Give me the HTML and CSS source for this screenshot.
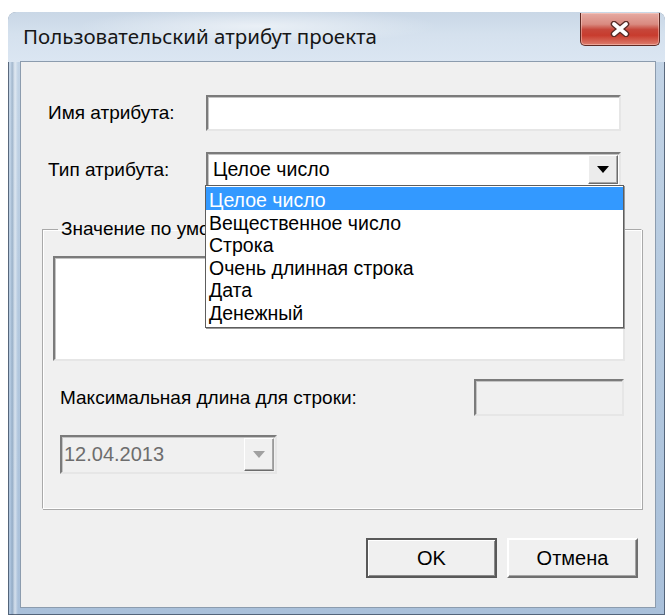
FILE: index.html
```html
<!DOCTYPE html>
<html lang="ru">
<head>
<meta charset="utf-8">
<title>Пользовательский атрибут проекта</title>
<link rel="stylesheet" href="styles.css">
</head>
<body>
<div class="window">
  <div class="titlebar">
    <span class="title">Пользовательский атрибут проекта</span>
    <button class="close" aria-label="Закрыть">
      <svg viewBox="0 0 22 16" width="22" height="16">
        <path class="x-edge" d="M5 3 L17 13 M17 3 L5 13"/>
        <path class="x-core" d="M5 3 L17 13 M17 3 L5 13"/>
      </svg>
    </button>
  </div>

  <div class="client">
    <div class="form">
      <label class="lbl">Имя атрибута:</label>
      <div class="edit name-edit"></div>

      <label class="lbl">Тип атрибута:</label>
      <div class="combo type-combo">
        <span class="combo-text">Целое число</span>
        <span class="drop-btn">
          <svg viewBox="0 0 12 7" width="12" height="7"><path d="M0 0 H12 L6 7 Z"/></svg>
        </span>
        <ul class="drop-list">
          <li class="sel">Целое число</li>
          <li>Вещественное число</li>
          <li>Строка</li>
          <li>Очень длинная строка</li>
          <li>Дата</li>
          <li>Денежный</li>
        </ul>
      </div>
    </div>

    <fieldset class="group">
      <legend>Значение по умолчанию</legend>
      <div class="edit memo"></div>
      <div class="max-row">
        <span class="lbl">Максимальная длина для строки:</span>
        <div class="edit max-edit"></div>
      </div>
      <div class="combo date-combo">
        <span class="combo-text">12.04.2013</span>
        <span class="drop-btn">
          <svg viewBox="0 0 12 7" width="12" height="7"><path d="M0 0 H12 L6 7 Z"/></svg>
        </span>
      </div>
    </fieldset>

    <div class="buttons">
      <button class="btn default">OK</button>
      <button class="btn">Отмена</button>
    </div>
  </div>
</div>
</body>
</html>
```

FILE: styles.css
```css
html, body {
  margin: 0;
  padding: 0;
  background: #ffffff;
}

body {
  width: 665px;
  height: 615px;
  overflow: hidden;
  font-family: "Liberation Sans", Arial, sans-serif;
  color: #000;
}

/* ---------- window frame ---------- */
.window {
  margin: 12px 0 0 8px;
  width: 657px;
  height: 603px;
  border-radius: 8px 8px 0 0;
  overflow: hidden;
  display: flex;
  flex-direction: column;
  background:
    linear-gradient(90deg, rgba(255,255,255,0) 0, rgba(255,255,255,0) 3px, rgba(90,120,150,.35) 4px, rgba(255,255,255,.5) 7px, rgba(255,255,255,0) 10px),
    linear-gradient(180deg, #cbd9e8 0, #c3d4e6 40px, #b4c9df 50%, #a9c0da 100%);
  box-shadow: inset 0 0 0 1px rgba(55, 70, 90, .75);
}

.titlebar {
  height: 50px;
  flex: none;
  display: flex;
  justify-content: space-between;
  align-items: flex-start;
  background:
    radial-gradient(ellipse 180px 18px at 250px 14px, rgba(255,255,255,.55), rgba(255,255,255,0)),
    linear-gradient(180deg, #c9d7e6 0, #d5e1ee 45%, #dbe6f2 100%);
}

.title {
  margin: 12px 0 0 15px;
  font-family: "Noto Sans", "Open Sans", sans-serif;
  font-size: 20.5px;
  line-height: 24px;
  color: #161616;
}

.close {
  margin: 1px 5px 0 0;
  width: 80px;
  height: 33px;
  padding: 0;
  border: 1px solid #5e2a24;
  border-top: none;
  border-radius: 0 0 5px 5px;
  background: linear-gradient(180deg, #e6aba3 0, #d98a80 35%, #c6463a 52%, #c83c2e 70%, #dd7e6e 100%);
  box-shadow: inset 0 0 0 1px rgba(255, 220, 210, .45);
  display: flex;
  align-items: center;
  justify-content: center;
}

.close svg { display: block; }

.x-edge {
  stroke: #5a2b26;
  stroke-width: 6.5;
  stroke-linecap: round;
  fill: none;
}

.x-core {
  stroke: #ffffff;
  stroke-width: 3.8;
  stroke-linecap: round;
  fill: none;
}

/* ---------- client area ---------- */
.client {
  flex: 1;
  margin: 0 10px 8px 13px;
  background: #f0f0f0;
  box-shadow: 0 0 0 1px #8c9cae;
  position: relative;
}

.lbl {
  font-size: 19px;
  line-height: 22px;
  color: #000;
  white-space: nowrap;
}

.form {
  display: grid;
  grid-template-columns: 158px 415px;
  row-gap: 21px;
  align-items: center;
  padding: 33px 0 0 27px;
}

/* sunken edit box */
.edit {
  box-sizing: border-box;
  background: #ffffff;
  border: 2px solid;
  border-color: #7b7b7b #e6e6e6 #e6e6e6 #7b7b7b;
  box-shadow: inset 1px 1px 0 #c4c4c4;
}

.name-edit { height: 36px; }

/* ---------- combo boxes ---------- */
.combo {
  box-sizing: border-box;
  position: relative;
  display: flex;
  align-items: stretch;
  background: #ffffff;
  border: 2px solid;
  border-color: #7b7b7b #e6e6e6 #e6e6e6 #7b7b7b;
  box-shadow: inset 1px 1px 0 #c4c4c4;
}

.type-combo { height: 35px; }

.combo-text {
  flex: 1;
  padding-left: 5px;
  font-size: 19.5px;
  line-height: 31px;
}

.drop-btn {
  flex: none;
  width: 28px;
  margin: 1px 1px 1px 0;
  background: #ececec;
  border: 1px solid;
  border-color: #ffffff #6c6c6c #6c6c6c #ffffff;
  box-shadow: inset -1px -1px 0 #a8a8a8;
  display: flex;
  align-items: center;
  justify-content: center;
}

.drop-btn svg { display: block; fill: #000; }

.drop-list {
  position: absolute;
  top: 100%;
  left: -3px;
  width: 419px;
  margin: 0;
  padding: 1px 0 5px;
  list-style: none;
  background: #ffffff;
  border: 1px solid #5d5d5d;
  box-sizing: border-box;
  box-shadow: 1px 1px 0 #9a9a9a;
  z-index: 2;
}

.drop-list li {
  height: 22.5px;
  line-height: 26px;
  padding-left: 3px;
  font-size: 19.5px;
  color: #000;
  white-space: nowrap;
}

.drop-list li.sel {
  background: #3399ff;
  color: #ffffff;
}

/* ---------- group box ---------- */
.group {
  width: 600px;
  box-sizing: border-box;
  margin: 31px 0 0 21px;
  padding: 0;
  border: 1px solid;
  border-color: #a9a9a9 #ffffff #ffffff #a9a9a9;
  box-shadow: inset 1px 1px 0 #ffffff, 1px 1px 0 #a9a9a9;
}

.group legend {
  margin-left: 15px;
  padding: 0 3px;
  font-size: 19px;
  line-height: 22px;
}

.memo {
  margin: 16px 0 0 10px;
  width: 572px;
  height: 105px;
}

.max-row {
  display: flex;
  justify-content: space-between;
  align-items: center;
  margin: 18px 17px 0 17px;
}

.max-edit {
  width: 150px;
  height: 37px;
  background: #f0f0f0;
}

.date-combo {
  width: 217px;
  height: 39px;
  margin: 19px 0 34px 17px;
  background: #f0f0f0;
}

.date-combo .combo-text {
  color: #6d6d6d;
  font-size: 20px;
  line-height: 35px;
  padding-left: 2px;
}

.date-combo .drop-btn {
  background: #f0f0f0;
  border-color: #ffffff #9a9a9a #6c6c6c #ffffff;
}

.date-combo .drop-btn svg { fill: #a0a0a0; }

/* ---------- dialog buttons ---------- */
.buttons {
  display: flex;
  justify-content: flex-end;
  gap: 10px;
  margin-top: 29px;
  padding-right: 17px;
}

.btn {
  box-sizing: border-box;
  width: 131px;
  height: 40px;
  padding: 0;
  font-family: "Liberation Sans", Arial, sans-serif;
  font-size: 20px;
  color: #000;
  background: #f0f0f0;
  border: 2px solid;
  border-color: #ffffff #6f6f6f #6f6f6f #ffffff;
  box-shadow: inset -1px -1px 0 #a5a5a5;
}

.btn.default {
  border: 2px solid #595959;
  box-shadow: inset 1px 1px 0 #ffffff, inset -1px -1px 0 #8a8a8a;
}
```
